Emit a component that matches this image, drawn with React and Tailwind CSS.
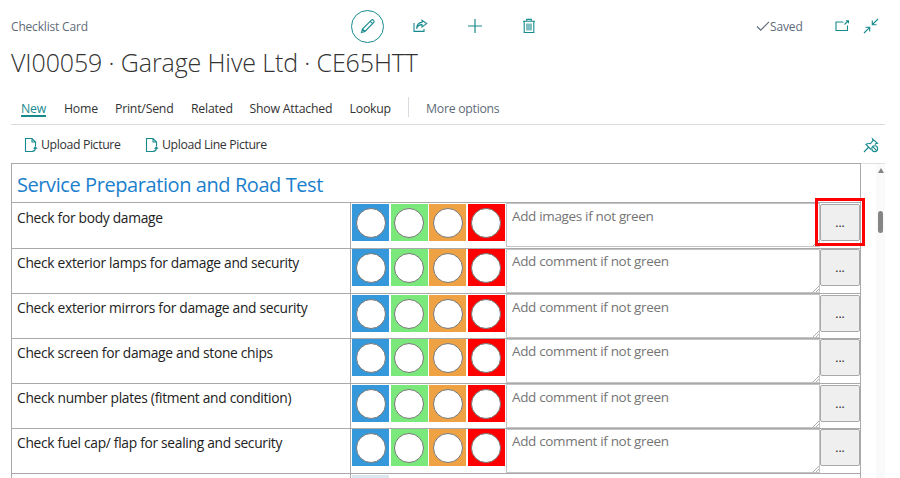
const sans = "font-['Open_Sans','Noto_Sans',sans-serif]";

const menu = [
  ['Home', 'w-[51px]'],
  ['Print/Send', 'w-[76px]'],
  ['Related', 'w-[58.5px]'],
  ['Show Attached', 'w-[100px]'],
  ['Lookup', 'w-[45px]'],
];

const rows = [
  ['Check for body damage', 'Add images if not green', 'h-[46px]', 'pt-px', 'pt-[5px]', 'pt-[3px]'],
  ['Check exterior lamps for damage and security', 'Add comment if not green', 'h-[45px]', 'pt-0', 'pt-[4px]', 'pt-[2px]'],
  ['Check exterior mirrors for damage and security', 'Add comment if not green', 'h-[45px]', 'pt-px', 'pt-[4px]', 'pt-[3px]'],
  ['Check screen for damage and stone chips', 'Add comment if not green', 'h-[45px]', 'pt-0', 'pt-[4px]', 'pt-[2px]'],
  ['Check number plates (fitment and condition)', 'Add comment if not green', 'h-[45px]', 'pt-px', 'pt-[4px]', 'pt-[3px]'],
  ['Check fuel cap/ flap for sealing and security', 'Add comment if not green', 'h-[45px]', 'pt-0', 'pt-[4px]', 'pt-[2px]'],
];

const colors = ['bg-[#3498db]', 'bg-[#7be87b]', 'bg-[#eea243]', 'bg-[#ff0000]'];

function Icon({ children, className = '' }) {
  return (
    <svg viewBox="0 0 16 16" fill="none" stroke="#178a8e" strokeWidth="1.1" className={`h-4 w-4 shrink-0 ${className}`}>
      {children}
    </svg>
  );
}

function UploadIcon() {
  return (
    <Icon>
      <path d="M8 14.5H1.5V1.5H8L11.5 5V9M8 1.5V5H11.5" />
      <path d="M8 14.3C10.5 14.3 11.3 13 11.3 11" strokeWidth="1.3" />
      <path d="M9 11.7L11.4 9L13.6 11.7Z" fill="#178a8e" stroke="none" />
    </Icon>
  );
}

function Row({ label, hint, height, inset, labelPad, hintPad }) {
  return (
    <div className={`flex shrink-0 border-t border-[#a9a9a9] ${height}`}>
      <div className={`w-[339px] border-r border-[#a9a9a9] pl-[5px] text-[13.8px] leading-[20px] tracking-[-0.3px] text-[#222] ${labelPad}`}>
        {label}
      </div>
      <div className={`flex w-[155px] gap-[1.5px] pl-[1px] ${inset}`}>
        {colors.map((c) => (
          <div key={c} className={`flex h-[37px] w-[37px] shrink-0 items-center justify-center ${c}`}>
            <span className="h-[30px] w-[30px] rounded-full border border-[#767676] bg-white" />
          </div>
        ))}
      </div>
      <div className="flex h-[44px] w-[314px] items-end justify-between border border-[#c4c4c4]">
        <span className={`self-start pl-[5px] text-[13.5px] leading-[19px] tracking-[-0.34px] text-[#757575] ${hintPad}`}>{hint}</span>
        <svg viewBox="0 0 6 6" className="h-[6px] w-[6px]" stroke="#999" strokeWidth="0.8">
          <path d="M0 6L6 0M3 6L6 3" />
        </svg>
      </div>
      <div className={inset}>
        <button className="flex h-[37px] w-[40px] items-center justify-center rounded-[2px] border border-[#a9a9a9] bg-[#efefef] text-[12px] text-[#222]">
          ...
        </button>
      </div>
    </div>
  );
}

export default function App() {
  return (
    <div className={`relative h-[478px] w-[900px] overflow-hidden bg-white text-[#333] ${sans}`}>
      <header className="flex h-[46px] items-center pl-[11px] pt-[6px] text-[12px]">
        <span className="w-[340px] pt-[2px] tracking-[-0.18px] text-[#5f6b7a]">Checklist Card</span>
        <span className="flex h-[33px] w-[33px] items-center justify-center rounded-full border border-[#178a8e]">
          <Icon>
            <path d="M1.5 14.5L2.5 11L11.4 2.1Q12.5 1.2 13.6 2.3Q14.7 3.4 13.8 4.5L4.9 13.4ZM2.5 11L4.9 13.4M10.2 3.3L12.6 5.7" />
          </Icon>
        </span>
        <Icon className="ml-[28px]">
          <path d="M2 5V13.4H12V11M4.7 10.8C5.2 8 7 6.6 10 6.6V9L14.7 5.6L10 2.4V4.4C6.5 4.6 4.7 7 4.7 10.8Z" />
        </Icon>
        <Icon className="ml-[39px]">
          <path d="M8 1V15M1 8H15" strokeWidth="1.2" />
        </Icon>
        <Icon className="ml-[38px]">
          <path d="M2 3.3H14M5.7 3V1.4H10.3V3M3.2 3.5V14.5H12.8V3.5M6 5.5V12.5M8 5.5V12.5M10 5.5V12.5" />
        </Icon>
        <svg viewBox="0 0 14 12" className="ml-[218.5px] h-3 w-[14px]" fill="none" stroke="#5f6b7a" strokeWidth="1.1">
          <path d="M1 6.5L4.7 10.2L13 1.8" />
        </svg>
        <span className="ml-[0.5px] w-[64px] pt-[2px] tracking-[-0.15px] text-[#5f6b7a]">Saved</span>
        <Icon>
          <path d="M9.5 4H2V12.5H13.5V7.5M10.5 6.5L14 3" />
          <path d="M11.5 2.3H15V5.8Z" fill="#178a8e" stroke="none" />
        </Icon>
        <Icon className="ml-[13px]">
          <path d="M15 1L9.3 6.7M9.3 2.5V6.7H13.5M1 15L6.7 9.3M2.5 9.3H6.7V13.5" />
        </Icon>
      </header>
      <h1 className="h-[48px] whitespace-nowrap pl-[11px] text-[25px] font-light leading-[32px] tracking-[-0.12px] text-[#333]">
        VI00059 · Garage Hive Ltd · CE65HTT
      </h1>
      <nav className="ml-[11px] flex h-[31px] w-[874px] items-start border-b border-[#dcdcdc] pl-[10px] pt-[5px] text-[12.3px] leading-[20px]">
        <span className="mr-[18px] h-[18px] w-[25px] border-b-2 border-[#178a8e] tracking-[-0.2px] text-[#178a8e]">New</span>
        {menu.map(([m, w]) => (
          <span key={m} className={`whitespace-nowrap tracking-[-0.22px] ${w}`}>{m}</span>
        ))}
        <span className="ml-[13px] h-[20px] w-[1.5px] -translate-y-[2px] bg-[#d8dae0]" />
        <span className="ml-[17px] whitespace-nowrap tracking-[-0.28px] text-[#5f6b7a]">More options</span>
      </nav>
      <div className="flex h-[38px] items-center pl-[24px] pt-px text-[12.3px] tracking-[-0.38px]">
        <UploadIcon />
        <span className="ml-[1px] w-[104px] whitespace-nowrap pt-px">Upload Picture</span>
        <UploadIcon />
        <span className="ml-[1px] whitespace-nowrap pt-px">Upload Line Picture</span>
        <Icon className="ml-auto mr-[21px]">
          <path d="M1 15L5.3 10.5M8 12.5L3 7.3Q5.5 6 7.5 6.7L10 3.7L9.5 2L14.5 6.3L13 6.5L12 7.5" />
          <circle cx="11.7" cy="11.7" r="2.9" />
          <path d="M9.7 9.7L13.7 13.7" />
        </Icon>
      </div>
      <main className="flex h-[315px]">
        <section className="ml-[11px] flex w-[850px] flex-col overflow-hidden border-l border-r border-t border-[#a9a9a9]">
          <h2 className="h-[38px] shrink-0 pl-[5px] pt-[5px] text-[20px] leading-[32px] tracking-[-0.42px] text-[#1b80cc]">
            Service Preparation and Road Test
          </h2>
          {rows.map(([label, hint, height, inset, labelPad, hintPad]) => (
            <Row key={label} label={label} hint={hint} height={height} inset={inset} labelPad={labelPad} hintPad={hintPad} />
          ))}
          <div className="flex h-[45px] shrink-0 border-t border-[#a9a9a9]">
            <div className="w-[339px] border-r border-[#a9a9a9]" />
            <div className="ml-[1px] mt-px h-[37px] w-[37px] bg-[#dce6ee]" />
          </div>
        </section>
        <div className="w-[24px] border-t border-[#e0e0e0] pl-[15px]">
          <div className="flex h-full w-[9px] flex-col items-center bg-[#fafafa] pt-[4px]">
            <svg viewBox="0 0 6 5" className="h-[5px] w-[6px] shrink-0" fill="#858585">
              <path d="M3 0L6 5H0Z" />
            </svg>
            <div className="mt-[38px] h-[22px] w-[5px] shrink-0 rounded-full bg-[#858585]" />
          </div>
        </div>
      </main>
      <div className="absolute left-[815px] top-[198px] h-[48px] w-[50px] border-[3px] border-[#ff0000]" />
    </div>
  );
}
